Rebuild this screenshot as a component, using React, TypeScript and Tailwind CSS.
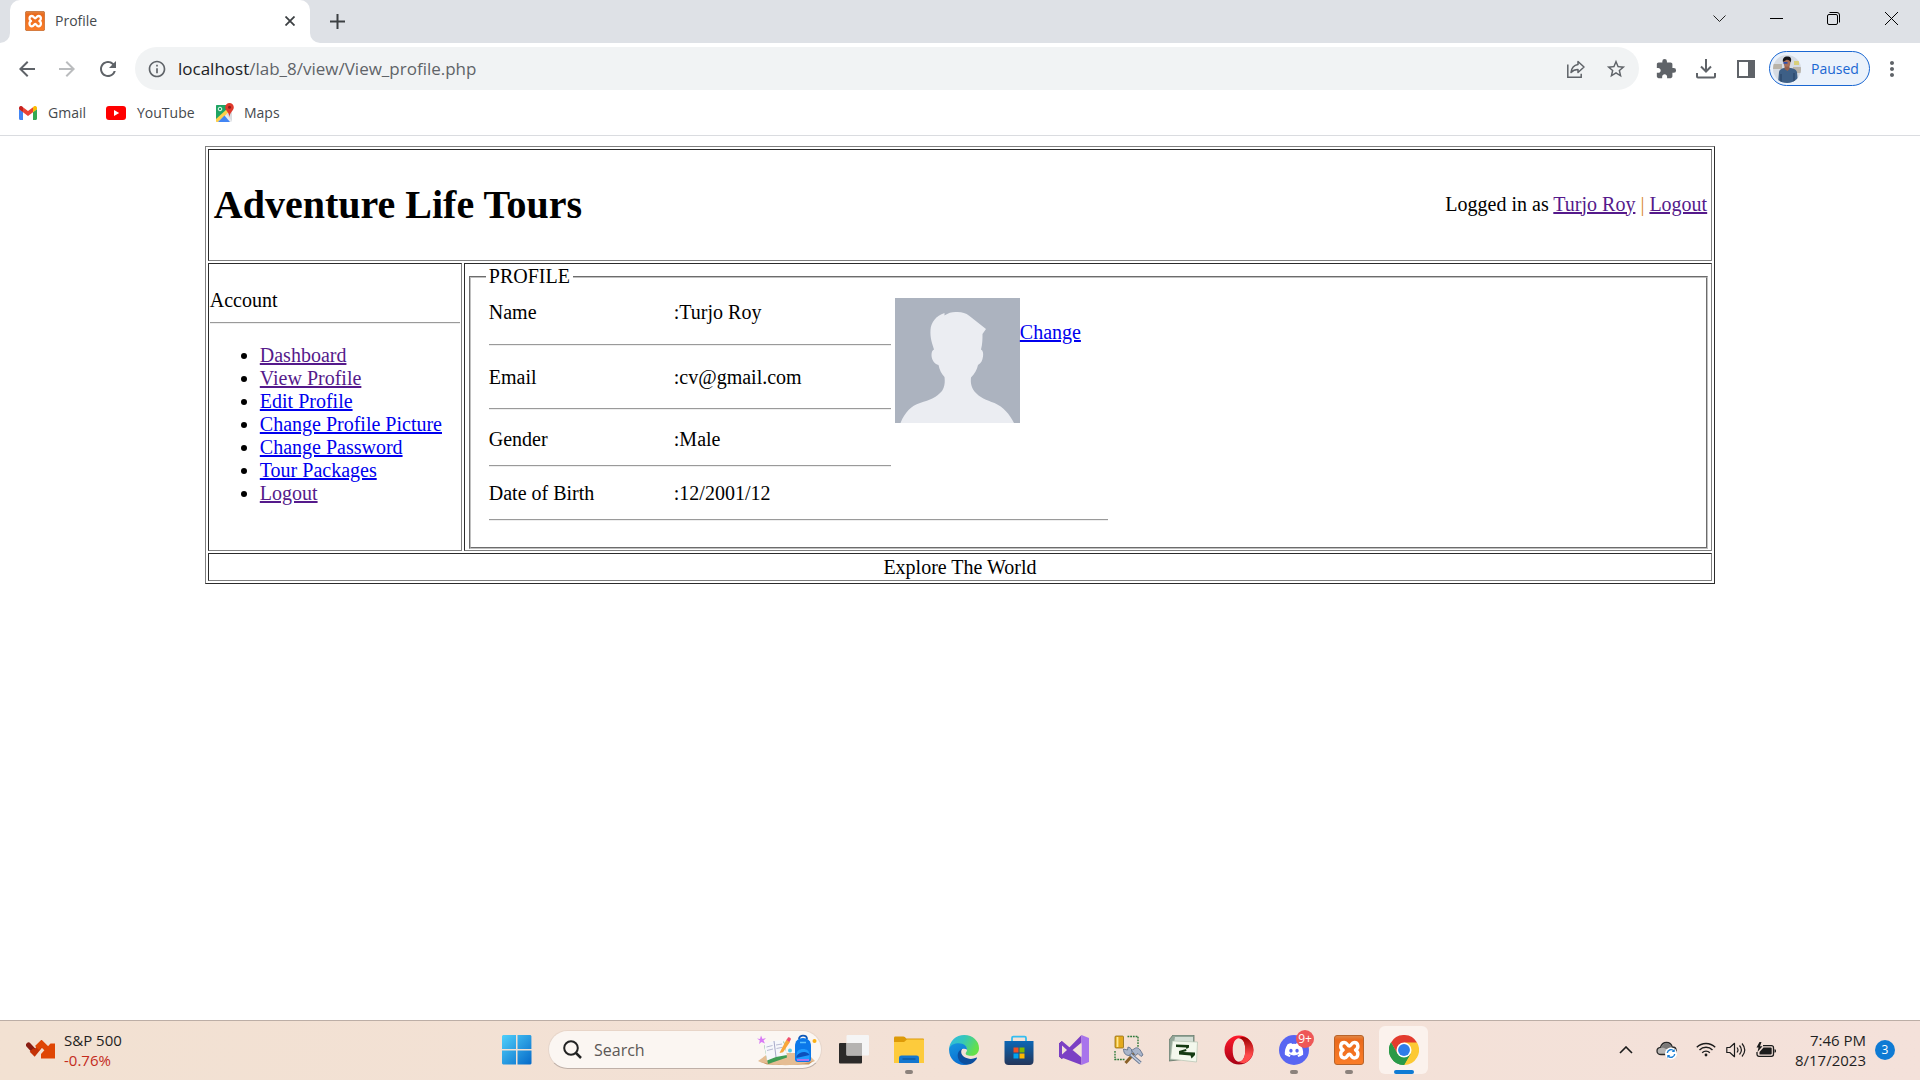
import type { ReactNode } from "react";
import {
  MdArrowBack,
  MdArrowForward,
  MdExtension,
  MdInfoOutline,
  MdMoreVert,
  MdRefresh,
  MdStarOutline,
} from "react-icons/md";
import { FaDiscord } from "react-icons/fa";

/* ---------- icons ---------- */

function XamppLogo({ className }: { className: string }) {
  return (
    <svg viewBox="0 0 30 30" className={className} aria-hidden="true">
      <defs>
        <linearGradient id="xa" x1="0" y1="0" x2="0" y2="1">
          <stop offset="0" stopColor="#e08a4a" />
          <stop offset=".15" stopColor="#ea6a1c" />
          <stop offset="1" stopColor="#fb7d28" />
        </linearGradient>
      </defs>
      <rect x=".5" y=".5" width="29" height="29" rx="2.5" fill="url(#xa)" stroke="#b8642a" />
      <path
        d="M10.300 7.500c3 0 3.200 3.600 5 3.600s2-3.600 5-3.600c4 0 5 5.400 1.200 7.500 3.800 2.100 2.800 8-1.200 8-3 0-3.200-3.800-5-3.800s-2 3.800-5 3.800c-4 0-5-5.900-1.200-8-3.800-2.100-2.800-7.500 1.200-7.500z"
        fill="none"
        stroke="#fff"
        strokeWidth="3.400"
        strokeLinejoin="round"
      />
    </svg>
  );
}

function GmailLogo() {
  return (
    <svg viewBox="0 0 18 14" className="h-[14px] w-[18px]" aria-hidden="true">
      <path d="M0 3v9.500C0 13.300.6 14 1.400 14H4V6z" fill="#4285f4" />
      <path d="M14 6v8h2.600c.8 0 1.400-.7 1.400-1.500V3z" fill="#34a853" />
      <path d="M4 1.200v5L9 10l5-3.800v-5L9 5z" fill="#ea4335" />
      <path d="M14 1.200v5l4-3V2c0-1.800-2-2.700-3.300-1.500z" fill="#fbbc04" />
      <path d="M4 1.200v5l-4-3V2C0 .2 2 -.7 3.300.5z" fill="#c5221f" />
    </svg>
  );
}

function YoutubeLogo() {
  return (
    <svg viewBox="0 0 20 14" className="h-[14px] w-5" aria-hidden="true">
      <rect width="20" height="14" rx="3" fill="#f00" />
      <path d="M8 4v6l5.200-3z" fill="#fff" />
    </svg>
  );
}

function MapsLogo() {
  return (
    <svg viewBox="0 0 20 20" className="size-5" aria-hidden="true">
      <rect x="1" y="2" width="16" height="17" rx="1.500" fill="#e8eaed" />
      <path d="M2 2h11L11 9 1 18V3c0-.6.400-1 1-1z" fill="#1fa463" />
      <path d="M1 16 12 6l2 3L3 19H2c-.6 0-1-.4-1-1z" fill="#ffd04b" />
      <path d="m3 19 6.500-6.500L15 19z" fill="#4285f4" />
      <path d="m11 11 6 7V9z" fill="#dadce0" />
      <circle cx="5" cy="6" r="1.800" fill="none" stroke="#fff" strokeWidth=".9" />
      <path d="M14.500 0a4.300 4.300 0 0 0-4.300 4.300c0 3.200 3.800 4.700 4.300 9.700.5-5 4.300-6.500 4.300-9.700A4.300 4.300 0 0 0 14.500 0z" fill="#e0392c" />
      <circle cx="14.500" cy="4.300" r="1.500" fill="#8c1d18" />
    </svg>
  );
}

function ShareIcon() {
  return (
    <svg viewBox="0 0 20 20" className="size-5" fill="none" stroke="#5f6368" strokeWidth="1.500" aria-hidden="true">
      <path d="M1.800 5.500v12.700h13.400v-3.500" />
      <path d="M12 2.500 18 8l-6 5.500v-3c-3 0-5 .7-7 3 .5-4.500 3-7.300 7-8z" strokeLinejoin="round" />
    </svg>
  );
}

function DownloadIcon() {
  return (
    <svg viewBox="0 0 20 20" className="size-5" fill="none" stroke="#5f6368" strokeWidth="2" aria-hidden="true">
      <path d="M10 0v12M5 7.500l5 5 5-5M1 14v3.500c0 .6.400 1 1 1h16c.6 0 1-.4 1-1V14" />
    </svg>
  );
}

function SidePanelIcon() {
  return (
    <svg viewBox="0 0 18 18" className="size-[18px]" aria-hidden="true">
      <path d="M0 0h18v18H0zM2 2v14h9V2z" fill="#5f6368" fillRule="evenodd" />
    </svg>
  );
}

function UserPhoto() {
  return (
    <svg viewBox="0 0 28 28" className="size-7 rounded-full" aria-hidden="true">
      <rect width="28" height="28" fill="#d5dbe3" />
      <path d="M0 9h9v5H0zM20 12h8v6h-8z" fill="#b9b3a8" />
      <path d="M21 6h5v4h-5z" fill="#d8cf7a" />
      <path d="M5 28 6 17c.4-3 4-4 8-4.500 5 .3 9 1.500 10 4.500l1 11z" fill="#3d5f86" />
      <path d="M8 19v9M21 18v10" stroke="#253f60" strokeWidth="1" />
      <path d="M11.500 10h5v4l-2 2-3-2z" fill="#96604c" />
      <ellipse cx="14" cy="7.500" rx="3.400" ry="4.200" fill="#a8705a" />
      <path d="M10 7c-1-4 2-6 5-5.500 3-.2 4 3 2.500 6-.5-2-2-3-4-2.700z" fill="#17161a" />
      <path d="M10.500 7h4v1.800h-4z" fill="#2d4fb0" />
    </svg>
  );
}

function ProfileSilhouette() {
  return (
    <svg viewBox="0 0 125 125" className="size-[125px] shrink-0" role="img" aria-label="Profile picture">
      <rect width="125" height="125" fill="#acb3bf" />
      <path
        d="M5.500 125C10 114 16 108 25 105c10-3 17-6 22-12 3-5 3-9 2.500-14-3-3-5-7-6-12-4-1-7-5-7-10 0-3 1-5 2.500-5.500C37 45 35 40 35.500 32 36 24 41 18 49.500 15l0 2.500c4-3 8-3.800 13-3.500 5 0 8 1 12 4l16.500 13-3.500 5c0 5 0 10-1.500 15.500 2 1 2.500 4 2 7-.5 4-2 7-5 8.500-1 5-3.500 9-7 12.500-.5 5 0 9 3.500 14 5 6 12 8.500 20 11.500 9 4 15 11 19.500 20z"
        fill="#ebedf2"
      />
    </svg>
  );
}

function StocksIcon() {
  return (
    <svg viewBox="0 0 30 20" className="h-5 w-[30px]" aria-hidden="true">
      <path d="m2.500 5 6 6.500" stroke="#8a1d12" strokeWidth="5" strokeLinecap="round" fill="none" />
      <path d="m5.500 10 3 3 7-8.500" stroke="#c43206" strokeWidth="5" fill="none" />
      <path d="m11 8 4.500-4.500 7 7" stroke="#df4604" strokeWidth="5.500" fill="none" />
      <path d="M29 3.500h-4.500L15 14v4.500h14z" fill="#df4604" />
    </svg>
  );
}

function WindowsLogo() {
  return (
    <svg viewBox="0 0 30 30" className="size-[30px]" aria-hidden="true">
      <defs>
        <linearGradient id="win" x1="0" y1="0" x2="1" y2="1">
          <stop offset="0" stopColor="#4fd0fb" />
          <stop offset="1" stopColor="#0569c8" />
        </linearGradient>
      </defs>
      <path d="M1 0h13v14H0V1zM15.500 0h13l.9 1v13H15.500zM0 15.500h14v14H1l-1-1zM15.500 15.500h14v13l-1 1h-13z" fill="url(#win)" />
    </svg>
  );
}

function BackpackArt() {
  return (
    <svg viewBox="0 0 60 32" className="h-8 w-[60px]" aria-hidden="true">
      <path d="M1 27 12 19h38l8 8c-10 5-46 6-57 0z" fill="#e5bd93" />
      <path d="M4 28c12 3.500 42 3.500 52-1l-4 3.500H10z" fill="#c99561" />
      <path d="m7 11 20-3.500 3 16L11 30z" fill="#3f9d55" />
      <path d="m7 10 10-3 2 16-9 3.500zM17 7l9-1 4 15-11 2z" fill="#f6f7fb" />
      <path d="m17 7 2 16" stroke="#a6a8c8" />
      <path d="m9.500 13 6-1.500M10 16.500l6-1.500M19 11l6-1M19.500 14.500l6-1.200" stroke="#b8bad2" strokeWidth="1" />
      <path d="m24 16-1.500 3 3.500-.8L33 8l-3.500-2.500z" fill="#f8a63a" />
      <path d="m29.500 6 1.500-2.500c.8-1 3.500.6 2.800 2L32.500 8z" fill="#f0506e" />
      <path d="M5 2.500 6.500 6 10 5 7.500 7.500 9 10.500 5.500 9 3 11l.8-3.500L1 5.500 4 6z" fill="#d87af5" transform="translate(-1 -1)" />
      <circle cx="33" cy="16.500" r="2" fill="#58cbe8" />
      <circle cx="57.500" cy="7" r="2" fill="#fbb014" />
      <path d="M42 5c0-4.500 8-4.500 8 0" fill="none" stroke="#0d57b8" strokeWidth="1.800" />
      <path d="M38 12c0-5 3-8 8-8s8 3 8 8v13c0 2-1 3-3 3H41c-2 0-3-1-3-3z" fill="#0b78ea" />
      <path d="M39.500 21c0-4 2.500-6 6.500-6s6.500 2 6.500 6v5h-13z" fill="#1e9bff" />
      <path d="M39.500 22c3-4 10-6 13-1l-13 3z" fill="#0c50bd" />
      <path d="M40 26h12" stroke="#b96ff0" strokeWidth="1.800" />
      <path d="M43 8.500h6" stroke="#5cc2ff" strokeWidth="1.500" />
    </svg>
  );
}

function TaskViewIcon() {
  return (
    <svg viewBox="0 0 30 30" className="size-[30px]" aria-hidden="true">
      <rect x="0" y="8" width="23" height="20.500" rx="1" fill="#2b2a29" />
      <rect x="7.500" y="0" width="22.500" height="20.500" rx="1" fill="#f5f5f5" />
      <path d="M7.500 8H23v12.500H7.500z" fill="#b5b3b1" />
    </svg>
  );
}

function FolderIcon() {
  return (
    <svg viewBox="0 0 30 30" className="size-[30px]" aria-hidden="true">
      <path d="M0 3c0-.8.500-1.500 1.300-1.500h8c1.200 0 2 .8 3 2h16.400c.8 0 1.300.5 1.300 1.300V10H0z" fill="#dd9a08" />
      <path d="M0 7h10l3-2.500h16c.6 0 1 .4 1 1V28H0z" fill="#fdcb3c" />
      <path d="M5 28v-5c0-1.700 1-2.500 2.500-2.500h15c1.500 0 2.500.8 2.500 2.500v5z" fill="#1477cf" />
      <path d="M8.500 24h13" stroke="#0b5296" strokeWidth="1.200" />
    </svg>
  );
}

function EdgeIcon() {
  return (
    <svg viewBox="0 0 256 256" className="size-[30px]" aria-hidden="true">
      <defs>
        <linearGradient id="eg1" x1="0" y1="0" x2="1" y2=".4">
          <stop offset="0" stopColor="#2fb9ea" />
          <stop offset=".5" stopColor="#36c7b9" />
          <stop offset="1" stopColor="#64e04a" />
        </linearGradient>
        <linearGradient id="eg2" x1="0" y1="0" x2=".4" y2="1">
          <stop offset="0" stopColor="#1697e0" />
          <stop offset="1" stopColor="#0a6fd0" />
        </linearGradient>
      </defs>
      <path d="M0 125C3 50 60 0 130 0c75 0 126 52 126 112 0 40-30 66-68 66-35 0-46-12-46-20 0-7 12-14 12-32 0-26-28-50-66-50-42 0-78 24-88 49z" fill="url(#eg1)" />
      <path d="M1 118C12 82 46 70 84 70c42 0 72 26 70 56-20-20-70-10-70 40 0 46 36 82 84 84-13 4-26 6-40 6C56 256-5 196 1 118z" fill="url(#eg2)" />
      <path d="M114 118c-30 12-44 40-38 72 7 38 45 64 88 62 30-6 55-22 72-48 5-9 1-14-6-10-45 24-125 2-126-48 0-12 4-22 10-28z" fill="#0c4f9e" />
    </svg>
  );
}

function StoreIcon() {
  return (
    <svg viewBox="0 0 30 30" className="size-[30px]" aria-hidden="true">
      <defs>
        <linearGradient id="st" x1="0" y1="0" x2="0" y2="1">
          <stop offset="0" stopColor="#0c66b5" />
          <stop offset="1" stopColor="#24365a" />
        </linearGradient>
      </defs>
      <path d="M8 8V3c0-.8.500-1.300 1.300-1.300h11.400c.8 0 1.300.5 1.300 1.300v5" fill="none" stroke="#34bdf0" strokeWidth="1.800" />
      <path d="M.5 6h29v20c0 2.500-1.500 4-4 4h-21c-2.500 0-4-1.500-4-4z" fill="url(#st)" />
      <path d="M9.500 12.500h5v5h-5z" fill="#f25022" />
      <path d="M15.500 12.500h5v5h-5z" fill="#7fba00" />
      <path d="M9.500 18.500h5v5h-5z" fill="#00a4ef" />
      <path d="M15.500 18.500h5v5h-5z" fill="#ffb900" />
    </svg>
  );
}

function VisualStudioIcon() {
  return (
    <svg viewBox="0 0 30 30" className="size-[30px]" aria-hidden="true">
      <path d="M0 8.500 3 6v18l-3-2.500z" fill="#52218a" />
      <path d="M3 6 22.500 22.500V30L0 21.500 3 20l19.500-20v7.500L3 24l-3-2.500v-13z" fill="#7b3fc4" />
      <path d="M3 10.500v9L8 15z" fill="#f2e1d8" />
      <path d="M22.500 0 30 3v24l-7.500 3z" fill="#a874ec" />
      <path d="M22.500 9v12L15 15z" fill="#f2e1d8" />
    </svg>
  );
}

function ToolsIcon() {
  return (
    <svg viewBox="0 0 30 30" className="size-[30px]" aria-hidden="true">
      <path d="M13.500 1.500H24v11M1 16v8.500h10" fill="none" stroke="#2f7a3b" strokeWidth="1.400" strokeDasharray="1.800 .9" />
      <rect x="1" y="1" width="8.500" height="12" rx="1" fill="#e3a81c" stroke="#8f6d18" strokeWidth=".8" />
      <path d="M3.500 2v10" stroke="#ffe892" strokeWidth="1.800" />
      <path d="m11.500 28 9-10" stroke="#8a6127" strokeWidth="3" />
      <path d="m15 18 11.500 10" stroke="#6c7c96" strokeWidth="3.600" />
      <path d="m15 18 11.500 10" stroke="#c4cede" strokeWidth="1.600" />
      <path d="m9.500 14 4 1 .5-3c3 .5 4.500 3 4 6l-3 2.500c-3 0-5.500-2-5.500-6.500z" fill="#a9b5ca" stroke="#586985" strokeWidth=".8" />
      <path d="m17.500 15.500 4-2.500c3-.8 4.500 1 7.500 7l-2 1.500-3-3-2.500 2z" fill="#a9b5ca" stroke="#586985" strokeWidth=".8" />
    </svg>
  );
}

function HeidiIcon() {
  return (
    <svg viewBox="0 0 30 30" className="size-[30px]" aria-hidden="true">
      <path d="M4 0h21v23L0 26V5z" fill="#93a698" stroke="#5f7464" strokeWidth=".8" />
      <path d="M6 2h18v5L5 8z" fill="#d5dfd6" />
      <path d="m3.500 6 25 1-1 20-26-3z" fill="#f3f8ed" stroke="#b4c3b2" strokeWidth=".7" />
      <path d="M7 9.500 20 10v2.500L17.500 14l-.5-1.500-10-.5zM10 16l7-2 .5 2-3.500 1 12 .5V20l-3.500 3.500-1-3L10 19.500z" fill="#143a12" />
    </svg>
  );
}

function OperaIcon() {
  return (
    <svg viewBox="0 0 30 30" className="size-[30px]" aria-hidden="true">
      <defs>
        <linearGradient id="op" x1="0" y1="0" x2="0" y2="1">
          <stop offset="0" stopColor="#ff1b2d" />
          <stop offset="1" stopColor="#a70014" />
        </linearGradient>
        <linearGradient id="op2" x1="0" y1="0" x2="0" y2="1">
          <stop offset="0" stopColor="#9c0000" />
          <stop offset=".7" stopColor="#ff4b4b" />
        </linearGradient>
      </defs>
      <path
        d="M15 .5a14.500 14.500 0 1 0 0 29 14.500 14.500 0 0 0 0-29zm0 2.800c4 0 6.300 5 6.300 11.700S19 26.700 15 26.700 8.700 21.700 8.700 15 11 3.300 15 3.300z"
        fill="url(#op)"
        fillRule="evenodd"
      />
      <path d="M15 3.300c3-2.300 6.500-1.500 9 .5 7 6 7 16.500 0 22.500-2.500 2-6 2.700-9 .4 4 0 6.300-5 6.300-11.700S19 3.300 15 3.300z" fill="url(#op2)" />
    </svg>
  );
}

function ChromeIcon() {
  return (
    <svg viewBox="0 0 48 48" className="size-[30px]" aria-hidden="true">
      <path d="M24 24 3.200 12A24 24 0 0 1 44.800 12z" fill="#e33b2e" />
      <path d="M24 24 24 12h20.800A24 24 0 0 1 24 48z" fill="#fcc934" />
      <path d="M24 24 34.400 30 24 48A24 24 0 0 1 3.200 12L13.600 30z" fill="#2a9a48" />
      <path d="M3.200 12 13.600 30 24 24V12z" fill="#e33b2e" />
      <path d="M3.200 12A24 24 0 0 0 24 48l10.400-18H13.600z" fill="#2a9a48" />
      <circle cx="24" cy="24" r="12" fill="#fff" />
      <circle cx="24" cy="24" r="9.500" fill="#2f7de9" />
    </svg>
  );
}

function CloudIcon() {
  return (
    <svg viewBox="0 0 22 20" className="h-5 w-[22px]" aria-hidden="true">
      <path d="M5 14.500C2.500 14.500 1 13 1 11s1.500-3.500 3.500-3.700C5.500 4 8 2.500 10.500 2.500c3 0 5 1.700 5.700 4.500 2.500 0 4 1.500 4 3.700s-1.500 3.800-4 3.800z" fill="#b7b4b2" stroke="#2b2b2b" strokeWidth="1.300" />
      <path d="M4.500 8C6 4.500 9 3 11 3.300c2 0 4.300 1.700 4.700 4.200-3-.5-4 1-5.200 2C9 8 7 7.500 4.500 8z" fill="#7b7978" />
      <circle cx="15" cy="13.500" r="6" fill="#fff" />
      <path d="M11.300 13a3.800 3.800 0 0 1 6.700-2M18.700 14a3.800 3.800 0 0 1-6.700 2" fill="none" stroke="#1b7fd6" strokeWidth="1.400" />
      <path d="M18.700 9v3h-3zM11.300 18v-3h3z" fill="#1b7fd6" />
    </svg>
  );
}

function WifiIcon() {
  return (
    <svg viewBox="0 0 20 15" className="h-[15px] w-5" fill="none" stroke="#1c1c1c" strokeWidth="1.400" aria-hidden="true">
      <path d="M.8 5.300a13 13 0 0 1 18.400 0M3.500 8a9.200 9.200 0 0 1 13 0M6.200 10.700a5.400 5.400 0 0 1 7.600 0" />
      <circle cx="10" cy="13" r="1.400" fill="#1c1c1c" stroke="none" />
    </svg>
  );
}

function SpeakerIcon() {
  return (
    <svg viewBox="0 0 20 16" className="h-4 w-5" fill="none" stroke="#1c1c1c" strokeWidth="1.200" aria-hidden="true">
      <path d="M.8 5.500h3L8.500 1.300v13.400l-4.700-4.200h-3z" strokeLinejoin="round" />
      <path d="M11 5.500c1.200 1.500 1.200 3.500 0 5M13.500 3.500c2.300 2.700 2.300 6.300 0 9M16 1.500c3.400 4 3.400 9 0 13" />
    </svg>
  );
}

function BatteryIcon() {
  return (
    <svg viewBox="0 0 20 16" className="h-4 w-5" aria-hidden="true">
      <path d="M7 3.700h8.500a2 2 0 0 1 2 2v6.600a2 2 0 0 1-2 2H3a2 2 0 0 1-2-2V10" fill="none" stroke="#1c1c1c" strokeWidth="1.300" />
      <path d="M18.500 7.300c1 0 1.500.5 1.500 1.700s-.5 1.700-1.500 1.700z" fill="#1c1c1c" />
      <path d="M7.500 5.500h7.300c.5 0 .9.400.9.900v5.200c0 .5-.4.900-.9.900H3.500V10z" fill="#1c1c1c" />
      <path d="M3.500 0 .5 5.500h2L1.500 10l5-5.700H4L5.500 0z" fill="#1c1c1c" />
    </svg>
  );
}

/* ---------- browser chrome ---------- */

function IconButton({ label, className, children }: { label: string; className: string; children: ReactNode }) {
  return (
    <button type="button" aria-label={label} className={`flex shrink-0 items-center justify-center ${className}`}>
      {children}
    </button>
  );
}

function TabStrip() {
  return (
    <div className="flex h-[43px] bg-[#dee1e6]">
      <div className="w-[10px] self-end bg-white">
        <div className="h-[10px] rounded-br-[10px] bg-[#dee1e6]" />
      </div>
      <div className="flex w-[300px] items-center rounded-t-[10px] bg-white pb-0.5 pl-[15px] pr-3">
        <XamppLogo className="size-5" />
        <span className="ml-[10px] grow text-sm text-[#45494d]">Profile</span>
        <IconButton label="Close tab" className="size-4">
          <svg viewBox="0 0 10 10" className="size-[10px]" stroke="#3c4043" strokeWidth="1.800" aria-hidden="true">
            <path d="m.5.5 9 9m0-9-9 9" />
          </svg>
        </IconButton>
      </div>
      <div className="w-[10px] self-end bg-white">
        <div className="h-[10px] rounded-bl-[10px] bg-[#dee1e6]" />
      </div>
      <IconButton label="New tab" className="w-[35px]">
        <svg viewBox="0 0 15 15" className="size-[15px]" stroke="#3c4043" strokeWidth="2" aria-hidden="true">
          <path d="M7.500 0v15M0 7.500h15" />
        </svg>
      </IconButton>
      <div className="ml-auto flex h-9">
        <IconButton label="Search tabs" className="w-[57px]">
          <svg viewBox="0 0 13 7" className="h-[7px] w-[13px]" fill="none" stroke="#222" aria-hidden="true">
            <path d="m.5.500 6 6 6-6" />
          </svg>
        </IconButton>
        <IconButton label="Minimize" className="w-[57px]">
          <svg viewBox="0 0 13 1" className="h-px w-[13px]" aria-hidden="true">
            <path d="M0 0h13v1H0z" />
          </svg>
        </IconButton>
        <IconButton label="Restore" className="w-[57px]">
          <svg viewBox="0 0 13 13" className="size-[13px]" fill="none" stroke="#000" aria-hidden="true">
            <rect x=".5" y="2.500" width="10" height="10" rx="1.500" />
            <path d="M2.500.5H10a2.500 2.500 0 0 1 2.500 2.500v7.500" />
          </svg>
        </IconButton>
        <IconButton label="Close" className="w-[58px]">
          <svg viewBox="0 0 13 13" className="size-[13px]" stroke="#000" aria-hidden="true">
            <path d="m0 0 13 13M13 0 0 13" />
          </svg>
        </IconButton>
      </div>
    </div>
  );
}

function Toolbar() {
  return (
    <div className="flex h-[53px] items-center pb-0.5 pr-[7px] text-[#5f6368]">
      <div className="flex pl-[7px]">
        <IconButton label="Back" className="w-10">
          <MdArrowBack className="size-6" />
        </IconButton>
        <IconButton label="Forward" className="w-10 text-[#babcbe]">
          <MdArrowForward className="size-6" />
        </IconButton>
        <IconButton label="Reload" className="w-[42px]">
          <MdRefresh className="size-6" />
        </IconButton>
      </div>
      <div className="ml-1.5 flex h-[43px] grow items-center rounded-full bg-[#f1f3f4] pl-3">
        <MdInfoOutline className="size-5" />
        <a href="#" className="ml-[11px] grow text-[17px]">
          <span className="text-[#202124]">localhost</span>/lab_8/view/View_profile.php
        </a>
        <IconButton label="Share" className="w-10">
          <ShareIcon />
        </IconButton>
        <IconButton label="Bookmark" className="mr-[3px] w-10">
          <MdStarOutline className="size-[22px]" />
        </IconButton>
      </div>
      <div className="flex items-center pl-[7px]">
        <IconButton label="Extensions" className="w-10">
          <MdExtension className="size-[22px]" />
        </IconButton>
        <IconButton label="Downloads" className="w-10">
          <DownloadIcon />
        </IconButton>
        <IconButton label="Side panel" className="w-10">
          <SidePanelIcon />
        </IconButton>
        <button
          type="button"
          className="ml-[3px] flex h-[35px] w-[101px] items-center rounded-full border border-[#1a67d2] bg-[#ebf2fb] pl-[3px] text-sm text-[#1a67d2]"
        >
          <UserPhoto />
          <span className="ml-[10px]">Paused</span>
        </button>
        <IconButton label="Menu" className="w-[43px]">
          <MdMoreVert className="size-6" />
        </IconButton>
      </div>
    </div>
  );
}

function BookmarksBar() {
  return (
    <nav className="flex h-10 items-start border-b border-[#dadce0] pl-[19px] pt-[6px] text-sm leading-[22px] text-[#45494d]">
      <a href="#" className="flex w-[87px] items-center gap-[11px]">
        <GmailLogo />
        Gmail
      </a>
      <a href="#" className="flex w-[109px] items-center gap-[11px]">
        <YoutubeLogo />
        YouTube
      </a>
      <a href="#" className="flex items-center gap-[9px]">
        <MapsLogo />
        Maps
      </a>
    </nav>
  );
}

/* ---------- page ---------- */

const accountLinks = [
  { label: "Dashboard", visited: true },
  { label: "View Profile", visited: true },
  { label: "Edit Profile", visited: false },
  { label: "Change Profile Picture", visited: false },
  { label: "Change Password", visited: false },
  { label: "Tour Packages", visited: false },
  { label: "Logout", visited: true },
];

function PageLink({ visited, children }: { visited: boolean; children: ReactNode }) {
  return (
    <a href="#" className={visited ? "text-[#551a8b] underline" : "text-[#0000ee] underline"}>
      {children}
    </a>
  );
}

function Cell({ className, children }: { className: string; children: ReactNode }) {
  return (
    <div className={`border border-b-[#808080] border-l-[#2c2c2c] border-r-[#808080] border-t-[#2c2c2c] ${className}`}>
      {children}
    </div>
  );
}

function Rule() {
  return <hr className="h-0.5 border-b border-t border-b-[#eeeeee] border-t-[#9a9a9a]" />;
}

function ProfileRow({ label, value, cell, picture }: { label: string; value: string; cell: string; picture?: ReactNode }) {
  return (
    <tr>
      <th scope="row" className={`text-left align-top font-normal ${cell}`}>
        {label}
      </th>
      <td className={`align-top ${cell}`}>:{value}</td>
      {picture}
    </tr>
  );
}

function RuleRow({ span }: { span: number }) {
  return (
    <tr>
      <td colSpan={span}>
        <Rule />
      </td>
    </tr>
  );
}

function ProfilePage() {
  return (
    <main className="grow bg-white px-4 pt-[10px] font-['Liberation_Serif',serif] text-xl leading-[23px] text-black">
      <div className="mx-auto flex w-4/5 flex-col gap-0.5 border border-b-[#2c2c2c] border-l-[#808080] border-r-[#2c2c2c] border-t-[#808080] p-0.5">
        <Cell className="flex h-28 items-center justify-between pl-[5px] pr-1">
          <h1 className="text-[40px] font-bold leading-[46px]">Adventure Life Tours</h1>
          <p className="pb-0.5">
            Logged in as <PageLink visited>Turjo Roy</PageLink> <span className="text-[#d98a2b]">|</span>{" "}
            <PageLink visited>Logout</PageLink>
          </p>
        </Cell>
        <div className="grid grid-cols-[254px_1fr] gap-0.5">
          <Cell className="px-px pt-[25px]">
            <p className="mb-[10px]">Account</p>
            <Rule />
            <ul className="mt-5 list-disc pl-[50px]">
              {accountLinks.map((link) => (
                <li key={link.label}>
                  <PageLink visited={link.visited}>{link.label}</PageLink>
                </li>
              ))}
            </ul>
          </Cell>
          <Cell className="py-px pl-1 pr-[3px]">
            <fieldset className="border-2 border-[#c0c0c0] pb-[26px] pl-[18px] [border-style:groove]">
              <legend className="-ml-[3px] px-[3px]">PROFILE</legend>
              <table className="w-[619px] table-fixed border-collapse">
                <colgroup>
                  <col className="w-[185px]" />
                  <col className="w-[217px]" />
                  <col />
                </colgroup>
                <tbody>
                  <ProfileRow
                    label="Name"
                    value="Turjo Roy"
                    cell="h-14 pt-[13px]"
                    picture={
                      <td rowSpan={6} className="pl-1 pt-[10px] align-top">
                        <div className="flex">
                          <ProfileSilhouette />
                          <span className="pt-[23px]">
                            <PageLink visited={false}>Change</PageLink>
                          </span>
                        </div>
                      </td>
                    }
                  />
                  <RuleRow span={2} />
                  <ProfileRow label="Email" value="cv@gmail.com" cell="h-[62px] pt-5" />
                  <RuleRow span={2} />
                  <ProfileRow label="Gender" value="Male" cell="h-[55px] pt-[18px]" />
                  <RuleRow span={2} />
                  <ProfileRow label="Date of Birth" value="12/2001/12" cell="h-[52px] pt-[15px]" />
                  <RuleRow span={3} />
                </tbody>
              </table>
            </fieldset>
          </Cell>
        </div>
        <Cell className="py-px text-center leading-6">Explore The World</Cell>
      </div>
    </main>
  );
}

/* ---------- taskbar ---------- */

function TaskbarApp({ label, running, children }: { label: string; running?: boolean; children: ReactNode }) {
  return (
    <button type="button" aria-label={label} className="relative flex h-full w-[55px] items-center justify-center">
      {children}
      {running && <span className="absolute bottom-1 h-1 w-2 rounded-full bg-[#8c827c]" />}
    </button>
  );
}

function Taskbar() {
  return (
    <footer className="grid h-[60px] grid-cols-[1fr_auto_1fr] border-t border-[#bcaea6] bg-linear-to-r from-[#f2e1d2] to-[#f4e1da] pb-0.5 text-[15px] leading-5 text-[#1f1f1f]">
      <button type="button" className="flex items-center gap-2 pl-[26px] text-left">
        <StocksIcon />
        <span>
          <span className="block">S&amp;P 500</span>
          <span className="block text-[#c42b1c]">-0.76%</span>
        </span>
      </button>
      <div className="flex items-center">
        <TaskbarApp label="Start">
          <WindowsLogo />
        </TaskbarApp>
        <label className="mx-1 flex h-[39px] w-[274px] items-center rounded-full border border-b-[#bfb0a8] border-l-[#e6d6cb] border-r-[#e6d6cb] border-t-[#e8d5c8] bg-[#fbf6f2] pl-[14px] pr-1">
          <svg viewBox="0 0 19 19" className="size-[19px] shrink-0" fill="none" stroke="#222" strokeWidth="2" aria-hidden="true">
            <circle cx="8" cy="8" r="6.800" />
            <path d="m13 13 5 5" strokeWidth="2.500" />
          </svg>
          <input
            type="text"
            aria-label="Search"
            placeholder="Search"
            className="ml-3 w-0 grow bg-transparent text-base outline-none placeholder:text-[#5c5856]"
          />
          <BackpackArt />
        </label>
        <TaskbarApp label="Task view">
          <TaskViewIcon />
        </TaskbarApp>
        <TaskbarApp label="File Explorer" running>
          <FolderIcon />
        </TaskbarApp>
        <TaskbarApp label="Edge">
          <EdgeIcon />
        </TaskbarApp>
        <TaskbarApp label="Store">
          <StoreIcon />
        </TaskbarApp>
        <TaskbarApp label="Visual Studio">
          <VisualStudioIcon />
        </TaskbarApp>
        <TaskbarApp label="SQL Server tools">
          <ToolsIcon />
        </TaskbarApp>
        <TaskbarApp label="Database client">
          <HeidiIcon />
        </TaskbarApp>
        <TaskbarApp label="Opera">
          <OperaIcon />
        </TaskbarApp>
        <TaskbarApp label="Discord" running>
          <span className="flex size-[30px] items-center justify-center rounded-full bg-[#5865f2]">
            <FaDiscord className="size-5 text-white" />
          </span>
          <span className="absolute right-[7px] top-[9px] flex size-[18px] items-center justify-center rounded-full bg-[#ee5757] text-[12px] leading-none text-white">
            9+
          </span>
        </TaskbarApp>
        <TaskbarApp label="XAMPP" running>
          <XamppLogo className="size-[30px]" />
        </TaskbarApp>
        <button type="button" aria-label="Chrome" className="relative mx-[3px] flex h-12 w-[49px] items-center justify-center rounded-md bg-[#fbf2ed]">
          <ChromeIcon />
          <span className="absolute bottom-0 h-1 w-5 rounded-full bg-[#0f7bd4]" />
        </button>
      </div>
      <div className="flex items-center justify-end pr-[25px]">
        <IconButton label="Show hidden icons" className="mr-[22px] w-4">
          <svg viewBox="0 0 14 8" className="h-2 w-[14px]" fill="none" stroke="#1c1c1c" strokeWidth="1.600" aria-hidden="true">
            <path d="m1 7 6-6 6 6" />
          </svg>
        </IconButton>
        <IconButton label="OneDrive" className="mr-[18px]">
          <CloudIcon />
        </IconButton>
        <button type="button" aria-label="Network, volume and battery" className="flex items-center gap-[10px]">
          <WifiIcon />
          <SpeakerIcon />
          <BatteryIcon />
        </button>
        <button type="button" className="ml-[10px] w-20 text-right">
          <span className="block">7:46 PM</span>
          <span className="block">8/17/2023</span>
        </button>
        <span className="ml-[9px] flex size-5 items-center justify-center rounded-full bg-[#0f7bd4] text-[12px] text-white">3</span>
      </div>
    </footer>
  );
}

export default function App() {
  return (
    <div className="flex min-h-screen flex-col bg-white font-['Open_Sans','Noto_Sans',sans-serif]">
      <header>
        <TabStrip />
        <Toolbar />
        <BookmarksBar />
      </header>
      <ProfilePage />
      <Taskbar />
    </div>
  );
}
